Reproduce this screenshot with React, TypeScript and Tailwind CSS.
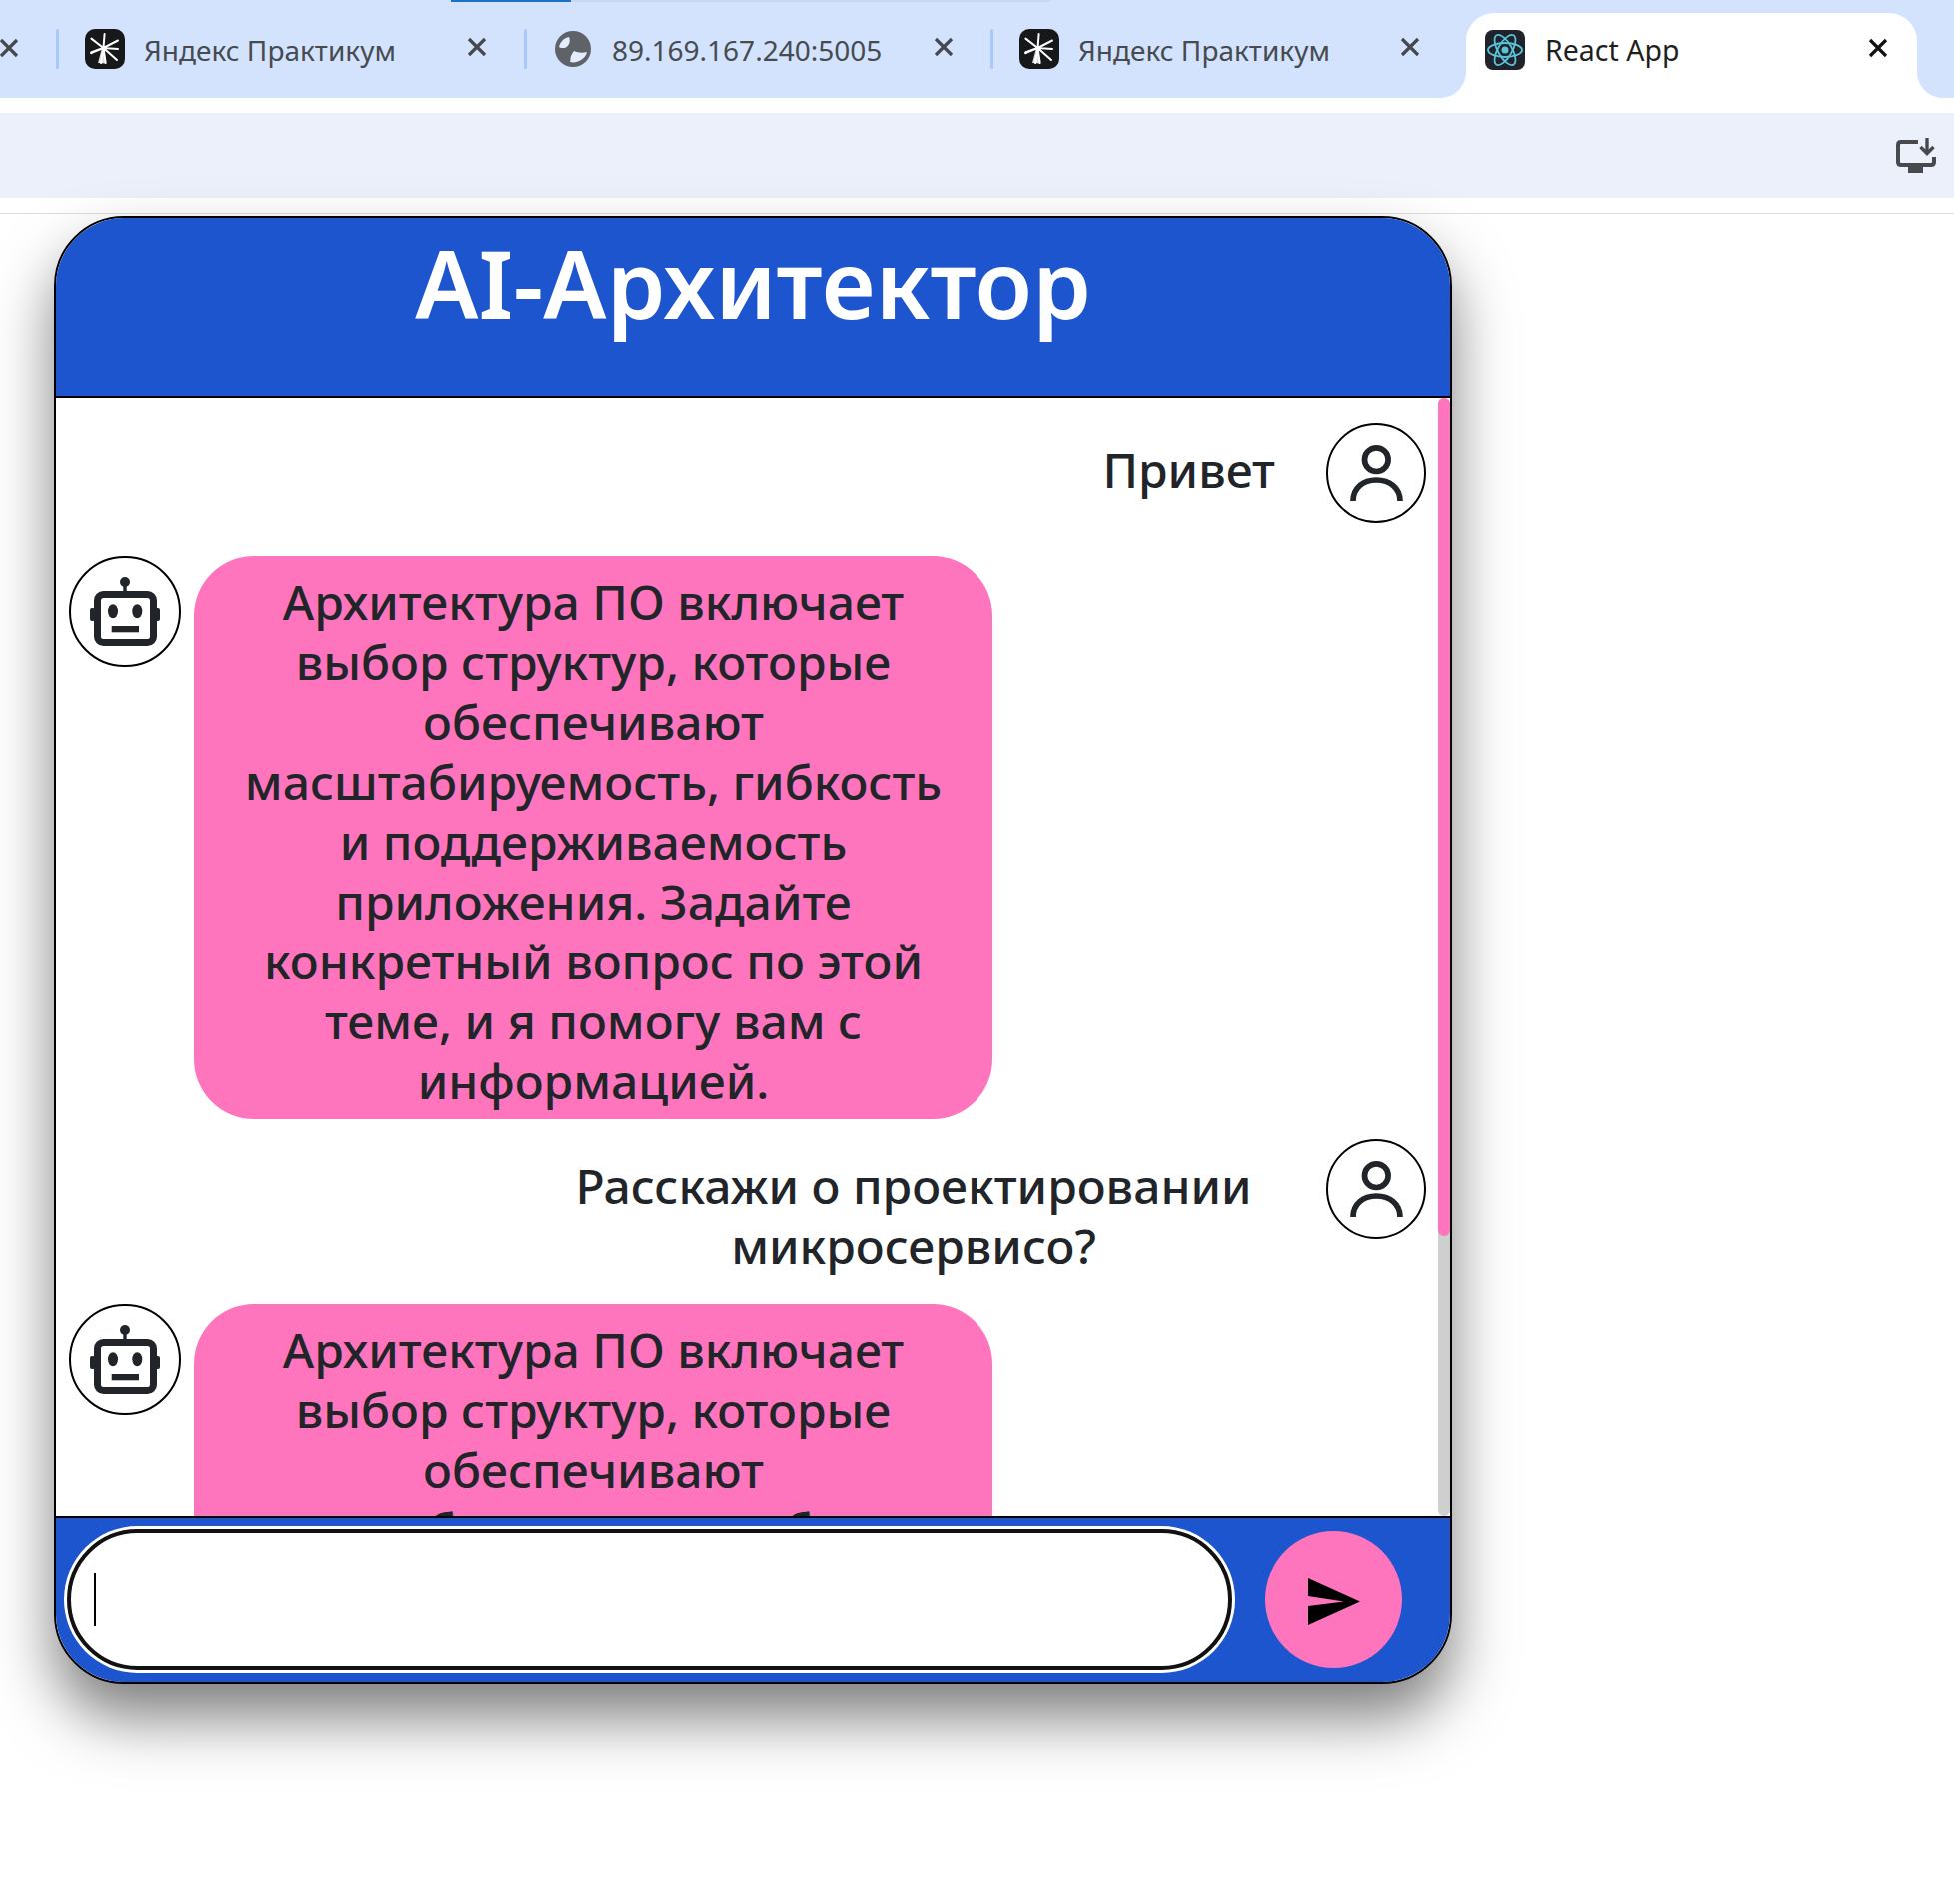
const BOT_LINES = [
  'Архитектура ПО включает',
  'выбор структур, которые',
  'обеспечивают',
  'масштабируемость, гибкость',
  'и поддерживаемость',
  'приложения. Задайте',
  'конкретный вопрос по этой',
  'теме, и я помогу вам с',
  'информацией.',
];

function AsteriskIcon() {
  return (
    <svg viewBox="0 0 40 40" className="h-10 w-10 shrink-0">
      <rect width="40" height="40" rx="10" fill="#17181a" />
      <g stroke="#fff" strokeWidth="2" strokeLinecap="round">
        <path d="M18.5 19L19.6 5M18.5 19L33 11.5M18.5 19L32 31M18.5 19L20.7 34M18.5 19L16 34M18.5 19L6 24M18.5 19L6.4 9.6M18.5 19L33 20" />
      </g>
      <path d="M18 18L5.5 22.5L6 25.5ZM17 19L13 34L20 34.5L20 19Z" fill="#fff" opacity="0.85" />
    </svg>
  );
}

function GlobeIcon() {
  return (
    <svg viewBox="0 0 36 36" className="h-9 w-9 shrink-0">
      <circle cx="18" cy="18" r="18" fill="#5f6368" />
      <path d="M4 16C5 11 9 7 14 6C15 8 15 11 14 13C13 15 11 17 9 17C7 17 5 17 4 16Z" fill="#e4edfd" />
      <path d="M19 20C23 22 28 22 32 21C31 25 29 27 26 29C23 31 19 32 15 31C16 29 15 27 16 25C17 23 18 21 19 20Z" fill="#e4edfd" />
    </svg>
  );
}

function ReactIcon() {
  return (
    <svg viewBox="0 0 40 40" className="h-10 w-10 shrink-0">
      <rect width="40" height="40" rx="8" fill="#20232a" />
      <g stroke="#58c4dc" strokeWidth="1.8" fill="none">
        <ellipse cx="20" cy="20" rx="17" ry="7" />
        <ellipse cx="20" cy="20" rx="17" ry="7" transform="rotate(60 20 20)" />
        <ellipse cx="20" cy="20" rx="17" ry="7" transform="rotate(120 20 20)" />
      </g>
      <circle cx="20" cy="20" r="3.5" fill="#58c4dc" />
    </svg>
  );
}

function CloseIcon({ dark }: { dark?: boolean }) {
  return (
    <svg viewBox="0 0 20 20" className="h-5 w-5 shrink-0">
      <path d="M2 2L18 18M18 2L2 18" stroke={dark ? '#111' : '#45494e'} strokeWidth="3.2" />
    </svg>
  );
}

function InstallIcon() {
  return (
    <svg viewBox="0 0 40 35" className="h-[35px] w-10" fill="none" stroke="#47494d" strokeWidth="4">
      <path d="M22 4H5Q2 4 2 7V24Q2 27 5 27H35Q38 27 38 24V19" />
      <path d="M31 0V15" strokeWidth="3.4" />
      <path d="M24.5 9L31 15.5L37.5 9" strokeWidth="3.4" />
      <path d="M12 29H27V35H12Z" fill="#47494d" stroke="none" />
    </svg>
  );
}

function RobotIcon() {
  return (
    <svg viewBox="0 0 70 70" className="h-[70px] w-[70px]" fill="#212529">
      <circle cx="35" cy="5" r="5" />
      <rect x="33.3" y="5" width="3.4" height="10" />
      <rect x="0" y="31" width="5" height="13" rx="2" />
      <rect x="65" y="31" width="5" height="13" rx="2" />
      <rect x="7.5" y="17.5" width="56" height="48" rx="6" fill="none" stroke="#212529" strokeWidth="7" />
      <ellipse cx="23" cy="34.3" rx="5" ry="7" />
      <ellipse cx="47.3" cy="34.3" rx="5" ry="7" />
      <rect x="21.7" y="49" width="27.3" height="6.3" />
    </svg>
  );
}

function UserIcon() {
  return (
    <svg viewBox="0 0 53 57" className="h-[57px] w-[53px]" fill="none" stroke="#212529" strokeWidth="5.7">
      <circle cx="26.3" cy="14.7" r="11.8" />
      <path d="M3 56C3 43 13 35 26.3 35S50 43 50 56" />
    </svg>
  );
}

function SendIcon() {
  return (
    <svg viewBox="0 0 52 47" className="mt-[3px] h-[47px] w-[52px]" fill="#000">
      <polygon points="0,0 52,23.5 0,47 0,28 36,23.5 0,18" />
    </svg>
  );
}

function Tab({ width, icon, title, closeClass }: { width: string; icon: React.ReactNode; title: string; closeClass: string }) {
  return (
    <div className={`flex h-10 shrink-0 items-center ${width}`}>
      <span className="h-10 w-[3px] shrink-0 rounded-full bg-[#a8c7fa]" />
      <div className="ml-[26px] flex w-[40px] shrink-0 justify-center">{icon}</div>
      <span className="ml-[19px] mt-[1px] whitespace-nowrap text-[28px] text-[#474b50]">{title}</span>
      <div className="flex-1" />
      <div className={`mb-1 ${closeClass}`}>
        <CloseIcon />
      </div>
    </div>
  );
}

function BotMessage({ lines, className }: { lines: string[]; className: string }) {
  return (
    <div className={`flex items-start pl-[13px] ${className}`}>
      <div className="flex h-[111px] w-[112px] shrink-0 items-center justify-center rounded-full border-2 border-black bg-white">
        <RobotIcon />
      </div>
      <div className="ml-[13px] w-[799px] shrink-0 rounded-[60px] bg-[#ff75bd] pb-[8px] pt-[16px] text-center">
        {lines.map((line) => (
          <div key={line}>{line}</div>
        ))}
      </div>
    </div>
  );
}

function UserMessage({ lines, className, boxClass }: { lines: string[]; className: string; boxClass: string }) {
  return (
    <div className={`flex items-start justify-end pr-[12px] ${className}`}>
      <div className={`mt-[5px] py-3 text-center ${boxClass}`}>
        {lines.map((line) => (
          <div key={line}>{line}</div>
        ))}
      </div>
      <div className="ml-[27px] flex h-[100px] w-[100px] shrink-0 items-center justify-center rounded-full border-2 border-black bg-white">
        <UserIcon />
      </div>
    </div>
  );
}

export default function App() {
  return (
    <div className="h-[1905px] w-full overflow-hidden bg-white font-['Noto_Sans',sans-serif]">
      {/* browser chrome */}
      <div className="relative h-[98px] bg-[#d3e3fd]">
        <div className="absolute left-[571px] top-0 h-[2px] w-[480px] bg-[#c9d8f0]" />
        <div className="absolute left-[451px] top-0 h-[2px] w-[120px] bg-[#1a73c8]" />
        <div className="flex h-[98px] items-start pt-[13px]">
          <div className="flex h-[70px] w-[56px] shrink-0 items-center">
            <div className="-ml-[1px]">
              <CloseIcon />
            </div>
          </div>
          <div className="flex w-[935px] shrink-0 pt-[16px]">
            <Tab width="w-[468px]" icon={<AsteriskIcon />} title="Яндекс Практикум" closeClass="mr-[37px]" />
            <Tab width="w-[467px]" icon={<GlobeIcon />} title="89.169.167.240:5005" closeClass="mr-[37px]" />
          </div>
          <div className="flex w-[476px] shrink-0 pt-[16px]">
            <Tab width="w-[476px]" icon={<AsteriskIcon />} title="Яндекс Практикум" closeClass="mr-[46px]" />
          </div>
          <div className="relative h-[85px] w-[451px] shrink-0 rounded-t-[28px] bg-white">
            <div className="absolute -left-[26px] bottom-0 h-[26px] w-[26px] bg-white">
              <div className="h-full w-full rounded-br-[26px] bg-[#d3e3fd]" />
            </div>
            <div className="absolute -right-[26px] bottom-0 h-[26px] w-[26px] bg-white">
              <div className="h-full w-full rounded-bl-[26px] bg-[#d3e3fd]" />
            </div>
            <div className="flex items-center pl-[19px] pt-[15px]">
              <ReactIcon />
              <span className="ml-[20px] mt-[1px] whitespace-nowrap text-[28.5px] text-[#1f1f1f]">React App</span>
              <div className="flex-1" />
              <div className="mb-1 mr-[29px]">
                <CloseIcon dark />
              </div>
            </div>
          </div>
        </div>
      </div>
      <div className="mt-[15px] flex h-[85px] items-center justify-end bg-[#ebf0fa] pr-[18px]">
        <InstallIcon />
      </div>
      <div className="mt-[15px] h-px bg-[#dedede]" />

      {/* chat card */}
      <div className="ml-[54px] mt-[2px] w-[1399px] overflow-hidden rounded-[70px] border-2 border-black bg-white text-[48px] font-medium leading-[60px] text-[#212529] shadow-[0_34px_60px_rgba(0,0,0,0.5)]">
        <div className="h-[180px] border-b-2 border-black bg-[#1c55cd] text-center text-[94px] font-semibold leading-[130px] text-white">
          AI-Архитектор
        </div>
        <div className="flex h-[1119px]">
          <div className="min-w-0 flex-1 overflow-hidden">
            <UserMessage lines={['Привет']} className="mt-[25px]" boxClass="px-6" />
            <BotMessage lines={BOT_LINES} className="mt-[33px]" />
            <UserMessage lines={['Расскажи о проектировании', 'микросервисо?']} className="mt-[20px]" boxClass="w-[772px]" />
            <BotMessage lines={BOT_LINES} className="mt-[16px]" />
          </div>
          <div className="h-full w-[12px] shrink-0 rounded-full bg-[#cfcfcf]">
            <div className="h-[839px] rounded-full bg-[#ff75bd]" />
          </div>
        </div>
        <div className="flex h-[166px] items-center border-t-2 border-black bg-[#1c55cd] pb-[1px] pl-[11px]">
          <div className="flex h-[141px] w-[1166px] shrink-0 items-center rounded-full border-4 border-[#111] bg-white pl-[23px] shadow-[0_0_0_3px_#fff]">
            <span className="h-[53px] w-[2px] bg-black" />
          </div>
          <div className="ml-[33px] flex h-[137px] w-[137px] shrink-0 items-center justify-center rounded-full bg-[#ff75bd]">
            <SendIcon />
          </div>
        </div>
      </div>
    </div>
  );
}
